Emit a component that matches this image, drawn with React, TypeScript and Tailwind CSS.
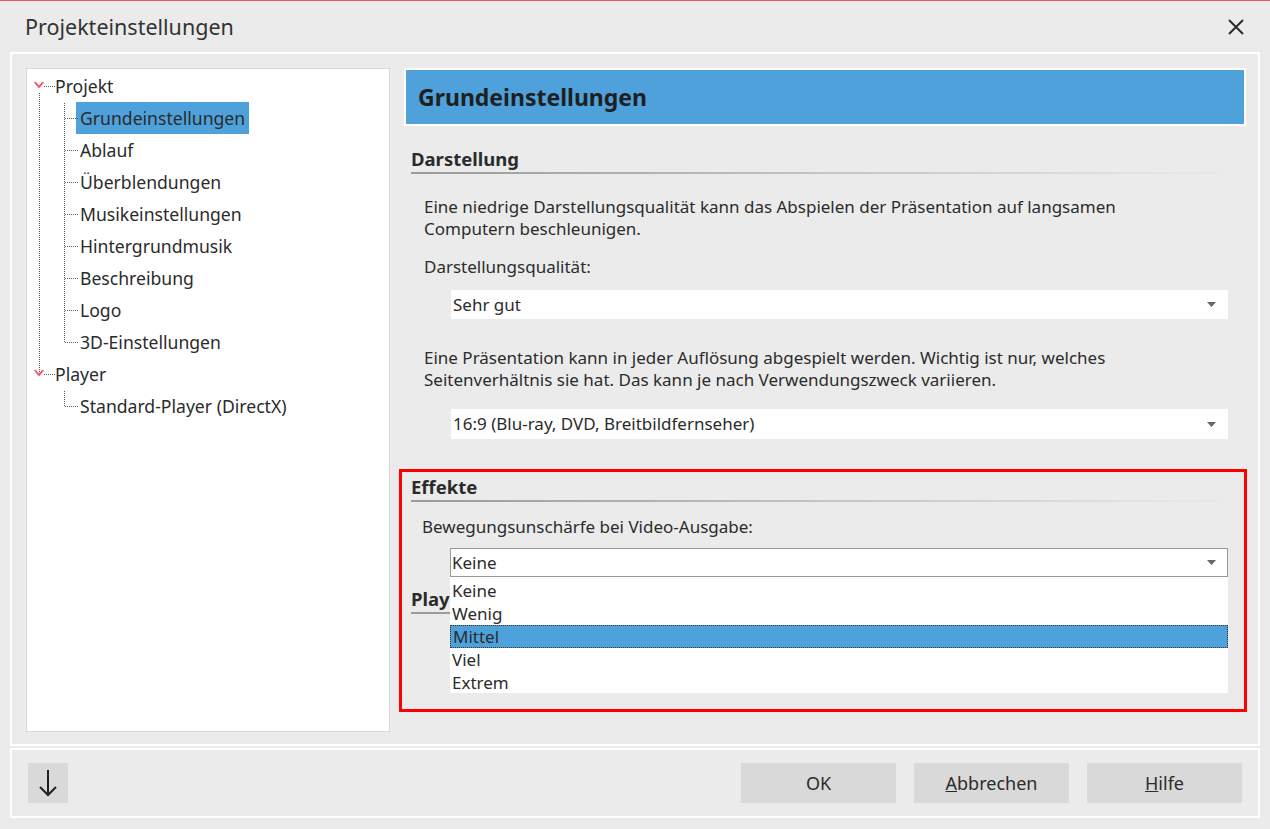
import React from "react";

const F = { fontFamily: '"Noto Sans", "Open Sans", sans-serif' };

function Chevron() {
  return (
    <svg width="10" height="8" viewBox="0 0 10 8" className="block">
      <path d="M0 1.5 L5 7.5 L10 1.5 L8.5 0.5 L5 4.5 L1.5 0.5 Z" fill="#ef5a5f" />
    </svg>
  );
}

function Caret() {
  return (
    <svg width="9" height="5" viewBox="0 0 9 5" className="block">
      <path d="M0 0 H9 L4.5 5 Z" fill="#666" />
    </svg>
  );
}

function SectionHeading({ children }: { children: React.ReactNode }) {
  return (
    <div>
      <div className="whitespace-nowrap text-[18.5px] font-bold leading-[24px] text-[#2b2b2b]">{children}</div>
      <div className="mt-[1px] h-[2px] w-[830px] bg-gradient-to-r from-[#9a9a9a] via-[#c4c4c4] to-transparent" />
    </div>
  );
}

const children1 = [
  "Grundeinstellungen",
  "Ablauf",
  "Überblendungen",
  "Musikeinstellungen",
  "Hintergrundmusik",
  "Beschreibung",
  "Logo",
  "3D-Einstellungen",
];

export default function App() {
  return (
    <div
      className="relative h-[829px] w-[1270px] overflow-hidden border-t border-[#f0595c] bg-[#ebebeb] text-[#2b2b2b]"
      style={F}
    >
      {/* Title bar */}
      <div className="flex h-[51px] items-center justify-between pl-[25px] pr-[26px]">
        <div className="text-[21.5px] leading-none text-[#333]">Projekteinstellungen</div>
        <svg width="16" height="16" viewBox="0 0 16 16" className="block">
          <path d="M1 1 L15 15 M15 1 L1 15" stroke="#2b2b2b" strokeWidth="2" />
        </svg>
      </div>

      {/* Main box */}
      <div className="mx-[10px] flex h-[694px] w-[1250px] gap-[11px] border-2 border-white px-[14px] pt-[14px] pb-[12px]">
        {/* Tree */}
        <div className="relative h-[664px] w-[364px] shrink-0 border border-[#d6d6d6] bg-white text-[17.6px] text-[#2b2b2b]">
          <svg className="absolute left-0 top-0" width="100" height="400">
            <g stroke="#555" strokeWidth="1" strokeDasharray="1 1" fill="none">
              <line x1="12.5" y1="24" x2="12.5" y2="305" />
              <line x1="17" y1="17.5" x2="28" y2="17.5" />
              <line x1="17" y1="305.5" x2="28" y2="305.5" />
              <line x1="37.5" y1="34" x2="37.5" y2="273" />
              {children1.map((_, i) => (
                <line key={i} x1="38" y1={49.5 + i * 32} x2="52" y2={49.5 + i * 32} />
              ))}
              <line x1="37.5" y1="322" x2="37.5" y2="337" />
              <line x1="38" y1="337.5" x2="52" y2="337.5" />
            </g>
          </svg>
          <div className="absolute left-[7px] top-[12px]"><Chevron /></div>
          <div className="absolute left-[7px] top-[300px]"><Chevron /></div>
          <div className="flex flex-col pt-[1px]">
            <div className="flex h-[32px] items-center pl-[28px]">Projekt</div>
            {children1.map((c, i) => (
              <div key={c} className="flex h-[32px] items-center pl-[49px]">
                <span
                  className={
                    "flex h-[32px] items-center px-[4px] " + (i === 0 ? "bg-[#4ea1da]" : "")
                  }
                >
                  {c}
                </span>
              </div>
            ))}
            <div className="flex h-[32px] items-center pl-[28px]">Player</div>
            <div className="flex h-[32px] items-center pl-[53px]">Standard-Player (DirectX)</div>
          </div>
        </div>

        {/* Right */}
        <div className="flex min-w-0 flex-1 flex-col text-[17px] text-[#2b2b2b]">
          <div className="mx-[3px] flex h-[58px] w-[842px] items-center border-2 border-white bg-[#4ea1da] pl-[12px]">
            <span className="text-[23px] font-bold text-[#1f1f1f]">Grundeinstellungen</span>
          </div>

          <div className="mt-[21px] pl-[10px]">
            <SectionHeading>Darstellung</SectionHeading>
          </div>

          <div className="mt-[22px] pl-[23px] leading-[22px]">
            Eine niedrige Darstellungsqualität kann das Abspielen der Präsentation auf langsamen
            <br />
            Computern beschleunigen.
          </div>
          <div className="mt-[16px] pl-[23px] leading-[22px]">Darstellungsqualität:</div>
          <div className="ml-[50px] mt-[12px] flex h-[29px] w-[777px] items-center justify-between bg-white pl-[2px] pr-[12px]">
            <span>Sehr gut</span>
            <Caret />
          </div>

          <div className="mt-[28px] pl-[23px] leading-[22px]">
            Eine Präsentation kann in jeder Auflösung abgespielt werden. Wichtig ist nur, welches
            <br />
            Seitenverhältnis sie hat. Das kann je nach Verwendungszweck variieren.
          </div>
          <div className="ml-[50px] mt-[18px] flex h-[30px] w-[777px] items-center justify-between bg-white pl-[2px] pr-[12px]">
            <span>16:9 (Blu-ray, DVD, Breitbildfernseher)</span>
            <Caret />
          </div>

          <div className="mt-[36px] pl-[10px]">
            <SectionHeading>Effekte</SectionHeading>
          </div>
          <div className="mt-[14px] pl-[21px] leading-[22px]">Bewegungsunschärfe bei Video-Ausgabe:</div>

          <div className="relative ml-[49px] mt-[10px] w-[778px]">
            <div className="flex h-[29px] items-center justify-between border border-[#9a9a9a] bg-white pl-[1px] pr-[11px]">
              <span>Keine</span>
              <Caret />
            </div>
            <div className="absolute left-0 right-0 top-full z-10 flex h-[116px] flex-col bg-white pt-[2px]">
              {["Keine", "Wenig", "Mittel", "Viel", "Extrem"].map((o) => (
                <div
                  key={o}
                  className={
                    "flex h-[23px] items-center px-[2px] " +
                    (o === "Mittel" ? "border border-dotted border-[#333] bg-[#4ea1da] px-[1px]" : "")
                  }
                >
                  {o}
                </div>
              ))}
            </div>
          </div>

          <div className="ml-[10px] mt-[10px] w-[39px] overflow-hidden">
            <SectionHeading>Player</SectionHeading>
          </div>
        </div>
      </div>

      {/* Footer */}
      <div className="mx-[10px] mt-[2px] flex h-[70px] w-[1250px] items-center justify-between border-2 border-white pl-[16px] pr-[16px]">
        <div className="flex h-[40px] w-[40px] items-center justify-center bg-[#d9d9d9]">
          <svg width="20" height="28" viewBox="0 0 20 28" className="block">
            <path d="M10 1 V26 M2 18 L10 26 L18 18" stroke="#1f1f1f" strokeWidth="2" fill="none" />
          </svg>
        </div>
        <div className="flex gap-[18px] text-[18px] text-[#2b2b2b]">
          <div className="flex h-[40px] w-[155px] items-center justify-center bg-[#d9d9d9]">OK</div>
          <div className="flex h-[40px] w-[155px] items-center justify-center bg-[#d9d9d9]">
            <span><span className="underline">A</span>bbrechen</span>
          </div>
          <div className="flex h-[40px] w-[155px] items-center justify-center bg-[#d9d9d9]">
            <span><span className="underline">H</span>ilfe</span>
          </div>
        </div>
      </div>

      {/* Red annotation */}
      <div className="pointer-events-none absolute left-[399px] top-[468px] z-20 h-[243px] w-[848px] border-[3px] border-[#ff0000]" />
    </div>
  );
}
